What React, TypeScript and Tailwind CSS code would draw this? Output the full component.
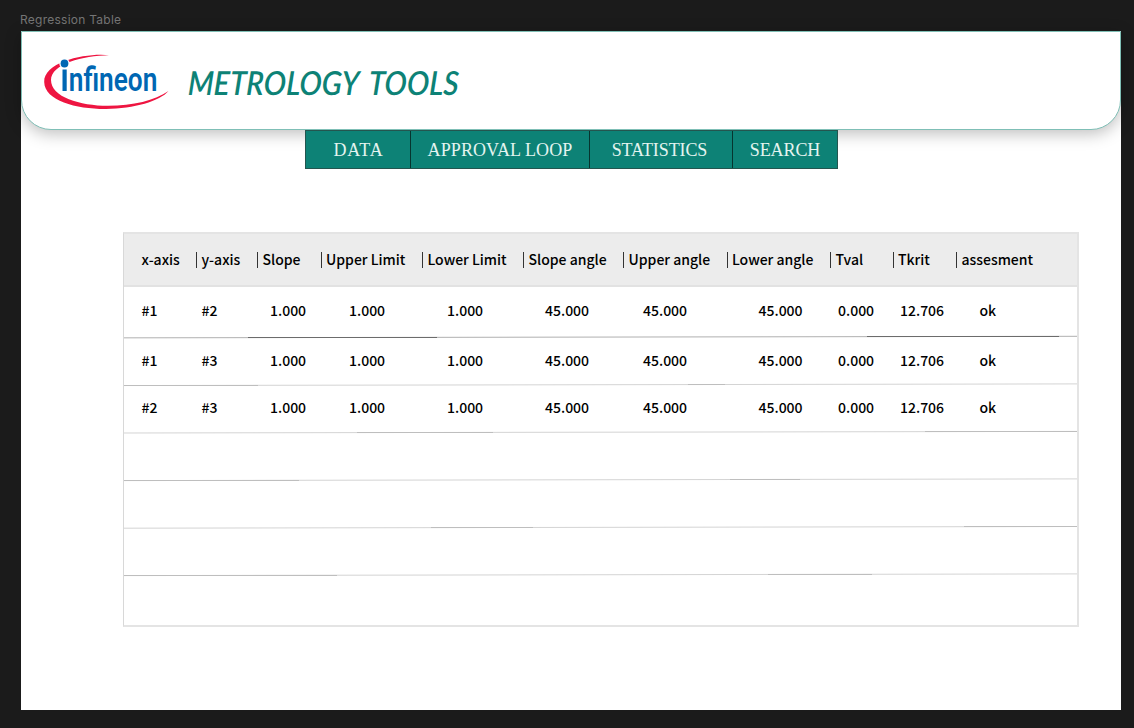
import React from 'react';

const headers = [
  { label: 'x-axis', w: 'w-[60px]' },
  { label: 'y-axis', w: 'w-[61px]' },
  { label: 'Slope', w: 'w-[63.5px]' },
  { label: 'Upper Limit', w: 'w-[101.5px]' },
  { label: 'Lower Limit', w: 'w-[101px]' },
  { label: 'Slope angle', w: 'w-[100px]' },
  { label: 'Upper angle', w: 'w-[103.5px]' },
  { label: 'Lower angle', w: 'w-[103.5px]' },
  { label: 'Tval', w: 'w-[62.5px]' },
  { label: 'Tkrit', w: 'w-[63.5px]' },
  { label: 'assesment', w: 'w-[90px]' },
];

const cellWidths = [
  'w-[60px]', 'w-[68.5px]', 'w-[79px]', 'w-[98px]', 'w-[98px]', 'w-[98px]',
  'w-[115.5px]', 'w-[79.5px]', 'w-[62px]', 'w-[79.5px]', 'w-[60px]',
];

const tail = ['1.000', '1.000', '1.000', '45.000', '45.000', '45.000', '0.000', '12.706', 'ok'];

// y1 and y2 are the rule's heights at the left and right edge of the table;
// solid lists the stretches [from, to, y] that lie on whole pixels
const rows = [
  { cells: ['#1', '#2', ...tail], h: 'h-[50px] pb-[4px]', line: '#b0b0b0', dark: '#6c6c6c', y1: 3.85, y2: 2.3, solid: [[124, 313, 3.5], [743, 935, 2.5]] },
  { cells: ['#1', '#3', ...tail], h: 'h-[48px] pb-[2px]', line: '#d4d4d4', dark: '#bebebe', y1: 3.55, y2: 1.9, solid: [[0, 134, 3.5], [564, 601, 2.5]] },
  { cells: ['#2', '#3', ...tail], h: 'h-[48px] pb-[4px]', line: '#d4d4d4', dark: '#bebebe', y1: 3.0, y2: 1.4, solid: [[233, 369, 2.5], [801, 953, 1.5]] },
  { cells: [], h: 'h-[47px]', line: '#d4d4d4', dark: '#bebebe', y1: 3.6, y2: 1.9, solid: [[0, 175, 3.5], [606, 676, 2.5]] },
  { cells: [], h: 'h-[48px]', line: '#d4d4d4', dark: '#bebebe', y1: 3.2, y2: 1.5, solid: [[307, 409, 2.5], [840, 953, 1.5]] },
  { cells: [], h: 'h-[47px]', line: '#d4d4d4', dark: '#bebebe', y1: 3.6, y2: 1.9, solid: [[0, 213, 3.5], [644, 748, 2.5]] },
  { cells: [], h: 'h-[50px]', line: '', dark: '', y1: 0, y2: 0, solid: [] },
];

const tabs = [
  { label: 'DATA', w: 'w-[104px]', t: 'tracking-[0.9px] pl-px' },
  { label: 'APPROVAL LOOP', w: 'w-[179px]', t: 'tracking-[0.1px]' },
  { label: 'STATISTICS', w: 'w-[143px]', t: 'tracking-[-0.1px] pr-[3px]' },
  { label: 'SEARCH', w: 'w-[105px]', t: 'tracking-[-0.1px]' },
];

function Logo() {
  return (
    <svg className="h-[60px] w-[128px] shrink-0 overflow-visible" viewBox="0 0 128 60" role="img" aria-label="infineon">
      <path
        d="M66 4.200C48 1.500 0.800 9 1.200 31C1.600 50 34 58.200 63 58C91 57.800 117 50 125.500 40C112 49.500 90 54.800 65 54.800C37 54.800 8 46 8 29C8 13 40 4.500 66 4.200Z"
        fill="#ee1541"
      />
      <circle cx="21.500" cy="12.500" r="5.200" fill="#fff" />
      <circle cx="21.500" cy="12.500" r="3.900" fill="#0067b3" />
      <rect x="19.500" y="18.500" width="4.200" height="21.500" fill="#0067b3" />
      <text x="25.800" y="40" textLength="88.500" lengthAdjust="spacingAndGlyphs" fill="#0067b3" fontFamily="Roboto, sans-serif" fontWeight="600" fontSize="34">
        nfineon
      </text>
    </svg>
  );
}

export default function App() {
  return (
    <div className="h-[728px] w-[1134px] overflow-hidden bg-[#1b1b1b] pl-[21px]">
      <div className="-ml-px h-[31px] pt-[12px] font-['Inter',sans-serif] text-[12px] leading-[15px] tracking-[0.250px] text-[#757575]">
        Regression Table
      </div>
      <main className="flex h-[679px] w-[1100px] flex-col bg-white">
        <header className="flex h-[99px] shrink-0 items-center rounded-b-[30px] border border-[#7fbfb6] bg-white pl-[21px] shadow-[0_4px_16px_rgba(0,0,0,0.25)]">
          <Logo />
          <h1 className="ml-[17px] mt-[3px] origin-left -skew-x-3 scale-x-90 whitespace-nowrap font-['Lato',sans-serif] text-[33px] font-semibold italic leading-[40px] tracking-[0.100px] [word-spacing:5px] text-[#0d8276]">
            METROLOGY TOOLS
          </h1>
        </header>
        <nav className="relative ml-[284px] flex h-[39px] w-[533px] shrink-0 border border-[#24554f] bg-[#0d8276]">
          {tabs.map((tab) => (
            <a key={tab.label} className={`${tab.w} ${tab.t} flex shrink-0 items-center justify-center whitespace-nowrap border-l border-[#06352f] pt-[2px] font-['Liberation_Serif',serif] text-[18px] text-[#e4f4f0] first:border-l-0`}>
              {tab.label}
            </a>
          ))}
        </nav>
        <section className="ml-[102px] mt-[63px] flex h-[395px] w-[956px] shrink-0 flex-col border-y-2 border-l border-r-2 border-[#e4e4e4] border-l-[#d8d8d8] font-['Noto_Sans_CJK_JP',sans-serif] text-[14px] font-medium text-black">
          <div className="flex h-[53px] shrink-0 items-center border-b-2 border-[#e2e2e2] bg-[#ececec] pb-px pl-[17.500px]">
            {headers.map((h, i) => (
              <div key={h.label} className={`${h.w} relative shrink-0 whitespace-nowrap`}>
                {i > 0 && <span className="absolute -left-[5.500px] top-[3px] h-4 w-px bg-[#333]" />}
                {h.label}
              </div>
            ))}
          </div>
          {rows.map((r, i) => (
            <div key={i} className={`${r.h} relative flex shrink-0 items-center pl-[17.500px]`}>
              {r.cells.map((c, j) => (
                <div key={j} className={`${cellWidths[j]} shrink-0 whitespace-nowrap`}>{c}</div>
              ))}
              {r.line && (
                <svg className="absolute -bottom-[3px] left-0 h-[6px] w-[953px]" viewBox="0 0 953 6">
                  <line x1="0" y1={r.y1} x2="953" y2={r.y2} stroke={r.line} strokeWidth="1" />
                  {r.solid.map(([from, to, y]) => (
                    <line key={from} x1={from} y1={y} x2={to} y2={y} stroke={r.dark} strokeWidth="1" />
                  ))}
                </svg>
              )}
            </div>
          ))}
        </section>
      </main>
    </div>
  );
}
